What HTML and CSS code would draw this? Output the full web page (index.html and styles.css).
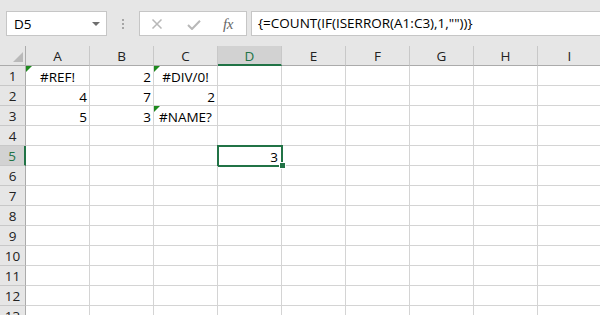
FILE: index.html
```html
<!DOCTYPE html>
<html lang="en">

<head>
    <meta charset="UTF-8" />
    <title>COUNT errors</title>
    <link rel="stylesheet" href="styles.css">
</head>

<body>
    <!-- Formula bar -->
    <div class="toolbar">
        <div class="name-box">
            <span>D5</span>
            <span class="caret"></span>
        </div>
        <div class="grip">
            <span></span><span></span><span></span>
        </div>
        <div class="fx-buttons">
            <svg class="btn-x" width="12" height="10" viewBox="0 0 12 10">
                <path d="M1.5 0.5 L10.5 9.5 M10.5 0.5 L1.5 9.5" stroke="#b8b8b8" stroke-width="1.5" fill="none" />
            </svg>
            <svg class="btn-ok" width="14" height="10" viewBox="0 0 14 10">
                <path d="M1 5 L5 9 L13 0.8" stroke="#b8b8b8" stroke-width="2" fill="none" />
            </svg>
            <span class="fx">fx</span>
        </div>
        <div class="formula">{=COUNT(IF(ISERROR(A1:C3),1,""))}</div>
    </div>

    <!-- Sheet -->
    <div class="sheet">
        <div class="corner"><span class="corner-tri"></span></div>
        <div class="col-head">A</div>
        <div class="col-head">B</div>
        <div class="col-head">C</div>
        <div class="col-head active">D</div>
        <div class="col-head">E</div>
        <div class="col-head">F</div>
        <div class="col-head">G</div>
        <div class="col-head">H</div>
        <div class="col-head">I</div>

        <div class="row-head">1</div>
        <div class="cell err flag">#REF!</div>
        <div class="cell num">2</div>
        <div class="cell err flag">#DIV/0!</div>
        <div class="cell"></div><div class="cell"></div><div class="cell"></div><div class="cell"></div><div class="cell"></div><div class="cell"></div>

        <div class="row-head">2</div>
        <div class="cell num">4</div>
        <div class="cell num">7</div>
        <div class="cell num">2</div>
        <div class="cell"></div><div class="cell"></div><div class="cell"></div><div class="cell"></div><div class="cell"></div><div class="cell"></div>

        <div class="row-head">3</div>
        <div class="cell num">5</div>
        <div class="cell num">3</div>
        <div class="cell err flag">#NAME?</div>
        <div class="cell"></div><div class="cell"></div><div class="cell"></div><div class="cell"></div><div class="cell"></div><div class="cell"></div>

        <div class="row-head">4</div>
        <div class="cell"></div><div class="cell"></div><div class="cell"></div><div class="cell"></div><div class="cell"></div><div class="cell"></div><div class="cell"></div><div class="cell"></div><div class="cell"></div>

        <div class="row-head active">5</div>
        <div class="cell"></div><div class="cell"></div><div class="cell"></div>
        <div class="cell num selected">3</div>
        <div class="cell"></div><div class="cell"></div><div class="cell"></div><div class="cell"></div><div class="cell"></div>

        <div class="row-head">6</div>
        <div class="cell"></div><div class="cell"></div><div class="cell"></div><div class="cell"></div><div class="cell"></div><div class="cell"></div><div class="cell"></div><div class="cell"></div><div class="cell"></div>
        <div class="row-head">7</div>
        <div class="cell"></div><div class="cell"></div><div class="cell"></div><div class="cell"></div><div class="cell"></div><div class="cell"></div><div class="cell"></div><div class="cell"></div><div class="cell"></div>
        <div class="row-head">8</div>
        <div class="cell"></div><div class="cell"></div><div class="cell"></div><div class="cell"></div><div class="cell"></div><div class="cell"></div><div class="cell"></div><div class="cell"></div><div class="cell"></div>
        <div class="row-head">9</div>
        <div class="cell"></div><div class="cell"></div><div class="cell"></div><div class="cell"></div><div class="cell"></div><div class="cell"></div><div class="cell"></div><div class="cell"></div><div class="cell"></div>
        <div class="row-head">10</div>
        <div class="cell"></div><div class="cell"></div><div class="cell"></div><div class="cell"></div><div class="cell"></div><div class="cell"></div><div class="cell"></div><div class="cell"></div><div class="cell"></div>
        <div class="row-head">11</div>
        <div class="cell"></div><div class="cell"></div><div class="cell"></div><div class="cell"></div><div class="cell"></div><div class="cell"></div><div class="cell"></div><div class="cell"></div><div class="cell"></div>
        <div class="row-head">12</div>
        <div class="cell"></div><div class="cell"></div><div class="cell"></div><div class="cell"></div><div class="cell"></div><div class="cell"></div><div class="cell"></div><div class="cell"></div><div class="cell"></div>
        <div class="row-head">13</div>
        <div class="cell"></div><div class="cell"></div><div class="cell"></div><div class="cell"></div><div class="cell"></div><div class="cell"></div><div class="cell"></div><div class="cell"></div><div class="cell"></div>
    </div>
</body>

</html>
```

FILE: styles.css
```css
/* === Base === */
*,
*::before,
*::after {
    margin: 0;
    padding: 0;
    box-sizing: border-box;
}

body {
    width: 600px;
    height: 315px;
    overflow: hidden;
    background-color: #FFFFFF;
    font-family: 'Open Sans', 'Noto Sans', sans-serif;
    font-size: 13.5px;
    color: #000000;
}

/* === Formula bar === */
.toolbar {
    height: 46px;
    background-color: #E6E6E6;
    display: flex;
    align-items: flex-start;
    padding: 11px 0 0 6px;
}

.name-box {
    width: 101px;
    height: 25px;
    background-color: #FFFFFF;
    border: 1px solid #C6C6C6;
    display: flex;
    align-items: center;
    justify-content: space-between;
    padding: 0 6px 0 7px;
    line-height: 22px;
}

.caret {
    width: 0;
    height: 0;
    border-left: 4px solid transparent;
    border-right: 4px solid transparent;
    border-top: 4px solid #6E6E6E;
}

.grip {
    width: 32px;
    height: 25px;
    display: flex;
    flex-direction: column;
    align-items: center;
    justify-content: center;
    gap: 2px;
}

.grip span {
    width: 2px;
    height: 2px;
    background-color: #A6A6A6;
}

.fx-buttons {
    width: 108px;
    height: 25px;
    background-color: #FFFFFF;
    border: 1px solid #C6C6C6;
    display: flex;
    align-items: center;
    padding: 0 0 0 11px;
}

.btn-x {
    margin-top: 1px;
    margin-right: 24px;
}

.btn-ok {
    margin-top: 3px;
    margin-right: 22px;
}

.fx {
    font-family: 'Liberation Serif', serif;
    font-style: italic;
    font-size: 15px;
    color: #666666;
    letter-spacing: -0.5px;
    line-height: 20px;
}

.formula {
    flex: 1;
    height: 25px;
    margin-left: 4px;
    margin-right: -4px;
    background-color: #FFFFFF;
    border: 1px solid #C6C6C6;
    padding-left: 6px;
    line-height: 22px;
}

/* === Sheet === */
.sheet {
    display: grid;
    grid-template-columns: 26px repeat(9, 64px);
    grid-auto-rows: 20px;
}

.corner {
    position: relative;
    background-color: #E6E6E6;
    border-right: 1px solid #ABABAB;
    border-bottom: 1px solid #ABABAB;
}

.corner-tri {
    position: absolute;
    right: 2px;
    bottom: 3px;
    width: 0;
    height: 0;
    border-left: 10px solid transparent;
    border-bottom: 10px solid #B9B9B9;
}

.col-head {
    background-color: #E6E6E6;
    border-right: 1px solid #C8C8C8;
    border-bottom: 1px solid #ABABAB;
    text-align: center;
    line-height: 20px;
    color: #222222;
}

.col-head.active {
    background-color: #D2D2D2;
    color: #217346;
    border-bottom: 2px solid #217346;
}

.row-head {
    background-color: #E6E6E6;
    border-right: 1px solid #ABABAB;
    border-bottom: 1px solid #C8C8C8;
    text-align: center;
    line-height: 20px;
    color: #222222;
}

.row-head.active {
    background-color: #D2D2D2;
    color: #217346;
    border-right: 2px solid #217346;
}

.cell {
    position: relative;
    border-right: 1px solid #D4D4D4;
    border-bottom: 1px solid #D4D4D4;
    display: flex;
    align-items: flex-end;
    line-height: 15px;
    padding: 0 2px;
    white-space: nowrap;
}

.num {
    justify-content: flex-end;
}

.err {
    justify-content: center;
}

/* error indicator triangle */
.flag::before {
    content: "";
    position: absolute;
    left: 0;
    top: 0;
    width: 0;
    height: 0;
    border-top: 6px solid #1E8A1E;
    border-right: 6px solid transparent;
}

/* active cell */
.selected {
    padding-right: 3px;
}

.selected::after {
    content: "";
    position: absolute;
    left: -1px;
    top: -1px;
    width: 66px;
    height: 22px;
    border: 2px solid #217346;
}

.selected::before {
    content: "";
    position: absolute;
    left: 61px;
    top: 16px;
    width: 7px;
    height: 7px;
    background-color: #217346;
    border: 1px solid #FFFFFF;
    z-index: 2;
}
```
